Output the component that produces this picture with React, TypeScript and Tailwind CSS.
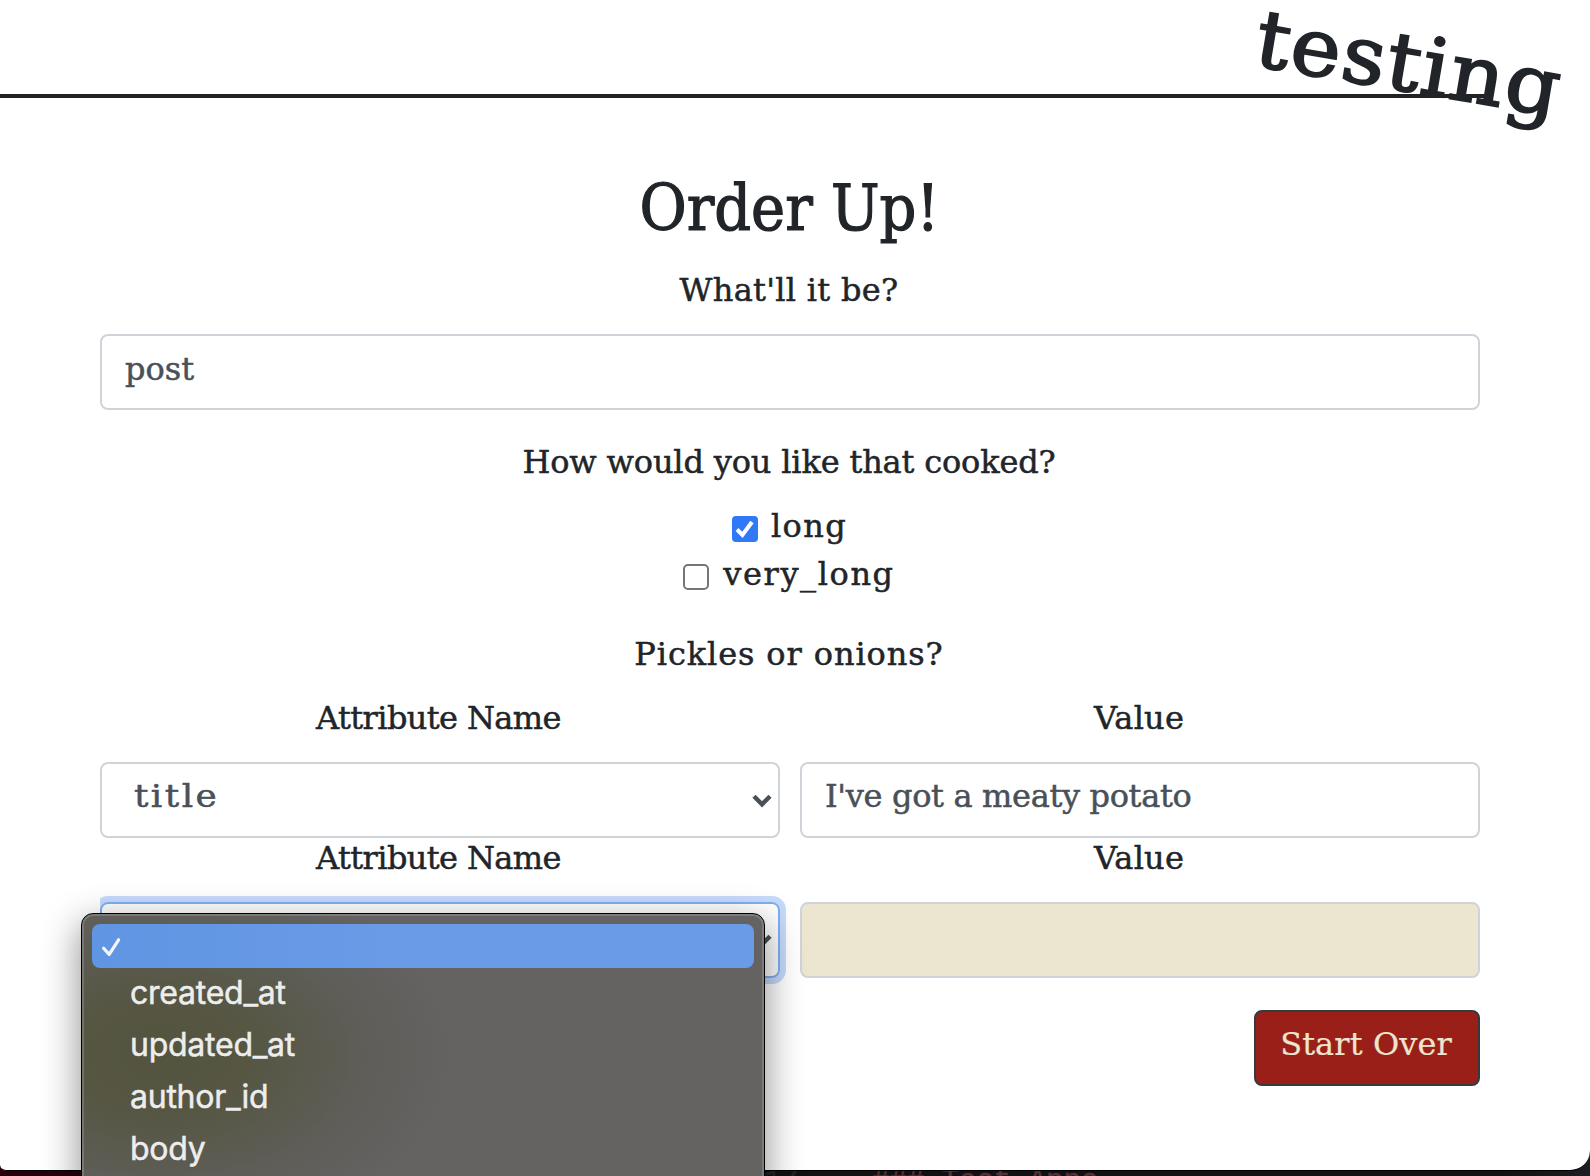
import type { ReactNode } from "react";

function Chevron() {
  return (
    <svg className="h-4 w-5" viewBox="0 0 20 16" fill="none" stroke="#495057" strokeWidth="4.4">
      <path d="M2 3.2 10 11.4 18 3.2" />
    </svg>
  );
}

function Question({ children, className }: { children: ReactNode; className: string }) {
  return <p className={`h-12 pr-0.5 text-center leading-[48px] ${className}`}>{children}</p>;
}

function Headings({ className }: { className: string }) {
  return (
    <div className={`grid grid-cols-2 gap-x-5 text-center leading-[48px] ${className}`}>
      <span className="pr-[3px] tracking-[-0.6px]">Attribute Name</span>
      <span className="pr-0.5 tracking-[0.2px]">Value</span>
    </div>
  );
}

function Tick() {
  return (
    <svg className="h-5 w-5" viewBox="0 0 20 20" fill="none" stroke="white" strokeWidth="4">
      <path d="M2 10.5 7.4 16 17 3" />
    </svg>
  );
}

function SelectMenu() {
  return (
    <div className="absolute left-[81px] top-[913px] h-[300px] w-[684px] rounded-xl border border-black bg-[radial-gradient(ellipse_290px_190px_at_80px_140px,#53543e_0%,#565643_30%,#5f5e59_72%,#656262_100%)] px-[10px] pt-[10px] font-[Inter] text-[32px] text-[#ededed] shadow-[inset_0_0_0_2px_rgba(255,255,255,0.17),0_12px_36px_2px_rgba(0,0,0,0.42)]">
      <div className="flex h-11 items-center rounded-lg bg-[linear-gradient(90deg,#5f95e3,#699be7_45%)] pl-2 pt-px">
        <svg className="h-6 w-6" viewBox="0 0 24 24" fill="none" stroke="#f4f7fd" strokeWidth="3.2" strokeLinecap="round" strokeLinejoin="round">
          <path d="M3.6 13.2 9.2 19.4 18.6 4.8" />
        </svg>
      </div>
      <ul className="-mt-px pl-[38px] leading-[52px] tracking-[-0.25px]">
        <li>created_at</li>
        <li>updated_at</li>
        <li>author_id</li>
        <li>body</li>
      </ul>
    </div>
  );
}

export default function App() {
  return (
    <div className="relative h-[1176px] w-[1590px] overflow-hidden bg-[linear-gradient(90deg,#270009_0,#270009_85px,#111115_765px,#111115_1500px,#1d1d22_1590px)] font-['DejaVu_Serif',serif] text-[32px] text-[#212529] [-webkit-text-stroke:0.5px_currentColor]">
      <div className="h-[1171px] rounded-bl-[6px] rounded-br-[20px] border-b border-black bg-white">
        <header className="h-[98px] w-[1492px] border-b-4 border-[#212222]" />
        <span className="absolute left-[1252px] top-[-2px] origin-[0_68px] rotate-[9.6deg] scale-x-[1.06] whitespace-nowrap text-[80px] leading-[80px] tracking-[1.5px] [-webkit-text-stroke:2px_currentColor]">
          testing
        </span>

        <main className="mx-[100px] w-[1380px] pt-[72px]">
          <h1 className="h-[77px] pr-px text-center font-['DejaVu_Serif_Condensed','DejaVu_Serif',serif] text-[64px] leading-[77px] [-webkit-text-stroke:1.2px_currentColor]">
            Order Up!
          </h1>
          <Question className="mt-[19px] tracking-[0.3px]">What'll it be?</Question>
          <div className="mt-5 h-[76px] rounded-lg border-2 border-[#ced4da] px-[23px] pt-[9px] leading-[48px] text-[#495057]">
            post
          </div>

          <Question className="mt-7 tracking-[-0.16px]">How would you like that cooked?</Question>
          <div className="mt-4 flex h-12 items-center justify-center gap-[13px] pr-px">
            <span className="mt-[5px] flex h-[26px] w-[26px] items-center justify-center rounded bg-[#2f79f6]">
              <Tick />
            </span>
            <span className="leading-[48px] tracking-[1.4px]">long</span>
          </div>
          <div className="flex h-12 items-center justify-center gap-[14px] pr-[2px]">
            <span className="mt-[5px] h-[26px] w-[26px] rounded-[5px] border-2 border-[#767676]" />
            <span className="leading-[48px] tracking-[1.6px]">very_long</span>
          </div>

          <Question className="mt-8 tracking-[0.9px]">Pickles or onions?</Question>
          <Headings className="mt-4" />
          <div className="mt-5 grid grid-cols-2 gap-5 leading-[48px] text-[#495057]">
            <div className="flex h-[76px] items-start justify-between rounded-lg border-2 border-[#ced4da] pl-8 pr-[6px] pt-2">
              <span className="origin-left scale-x-[1.12] tracking-[2.2px]">title</span>
              <span className="mt-[21px] flex">
                <Chevron />
              </span>
            </div>
            <div className="h-[76px] rounded-lg border-2 border-[#ced4da] px-[23px] pt-2 tracking-[-0.33px]">
              I've got a meaty potato
            </div>
          </div>

          <Headings className="-mt-1" />
          <div className="mt-5 grid grid-cols-2 gap-5">
            <div className="flex h-[76px] items-start justify-end rounded-lg border-2 border-[#80b0f3] pr-[6px] pt-[29px] shadow-[0_0_0_6px_#c6dafc] [clip-path:inset(-6px_-6px_-6px_0)]">
              <Chevron />
            </div>
            <div className="h-[76px] rounded-lg border-2 border-[#ced4da] bg-[#ece6d1]" />
          </div>

          <div className="mt-8 flex justify-end">
            <button className="flex h-[76px] w-[226px] items-start justify-center rounded-lg border-2 border-[#343a40] bg-[#9a1f18] pr-0.5 pt-2 leading-[48px] tracking-[0.1px] text-[#ece5d0] [-webkit-text-stroke:0.2px_currentColor]">
              Start Over
            </button>
          </div>
        </main>
      </div>

      <div className="flex h-[5px] overflow-hidden whitespace-pre pl-[764px] font-['Liberation_Mono',monospace] text-[29px] leading-[29px] text-[#5a2f34]">
        <span className="-mt-1 w-[108px] text-[#22262c]">17</span>
        <span className="-mt-1">### Test Apps</span>
      </div>

      <SelectMenu />
    </div>
  );
}
